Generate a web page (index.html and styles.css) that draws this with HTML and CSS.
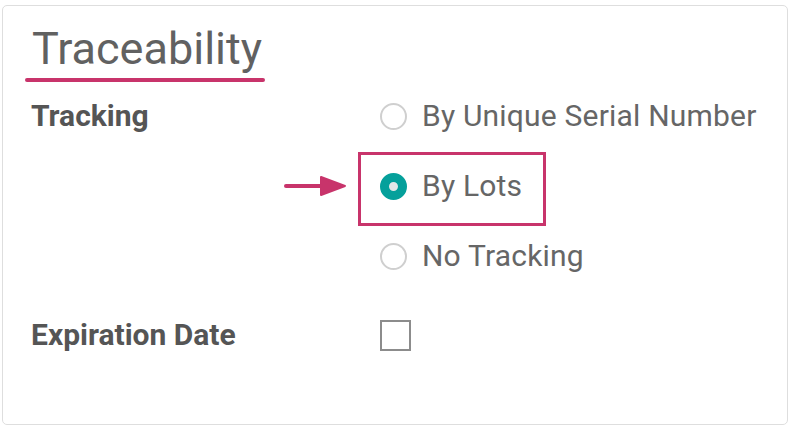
FILE: index.html
```html
<!DOCTYPE html>
<html>
<head>
<meta charset="utf-8">
<link rel="stylesheet" href="styles.css">
</head>
<body>
<div class="card">
  <div class="heading">
    <h2 class="title">Traceability</h2>
    <div class="underline"></div>
  </div>
  <div class="form">
    <div class="label label-tracking">Tracking</div>
    <div class="options">
      <div class="option">
        <span class="radio"></span>
        <span class="option-text">By Unique Serial Number</span>
      </div>
      <div class="option option-selected">
        <svg class="arrow" width="66" height="24" viewBox="0 0 66 24">
          <line x1="3" y1="12" x2="42" y2="12" stroke="#c8346b" stroke-width="4" stroke-linecap="round"/>
          <polygon points="38,3 62,12 38,21" fill="#c8346b" stroke="#c8346b" stroke-width="2" stroke-linejoin="round"/>
        </svg>
        <span class="highlight"></span>
        <span class="radio radio-checked"></span>
        <span class="option-text">By Lots</span>
      </div>
      <div class="option">
        <span class="radio"></span>
        <span class="option-text">No Tracking</span>
      </div>
    </div>
    <div class="label label-expiration">Expiration Date</div>
    <div class="check-cell">
      <span class="checkbox"></span>
    </div>
  </div>
</div>
</body>
</html>
```
FILE: styles.css
```css
html, body {
  margin: 0;
  padding: 0;
  background: #ffffff;
}

body {
  font-family: Roboto, "Liberation Sans", sans-serif;
}

.card {
  box-sizing: border-box;
  margin: 5px 5px 0 2px;
  width: 786px;
  height: 420px;
  border: 1px solid #dedede;
  border-radius: 5px;
  padding: 17px 0 0 22px;
}

.heading {
  display: inline-block;
}

.title {
  margin: 0;
  padding: 0 3px 0 7px;
  font-size: 45px;
  line-height: 52px;
  font-weight: 400;
  color: #616161;
}

.underline {
  margin-top: 3px;
  height: 4px;
  border-radius: 2px;
  background: #c8346b;
}

.form {
  display: grid;
  grid-template-columns: 349px 1fr;
  row-gap: 45px;
  margin-top: 17px;
  padding-left: 6px;
}

.label {
  font-size: 30px;
  line-height: 34px;
  font-weight: 700;
  color: #555555;
}

.options {
  display: flex;
  flex-direction: column;
  gap: 36px;
}

.option {
  position: relative;
  display: flex;
  align-items: center;
  gap: 15px;
  height: 34px;
}

.option-text {
  font-size: 30px;
  line-height: 34px;
  letter-spacing: 0.2px;
  color: #666666;
}

.radio {
  box-sizing: border-box;
  flex: none;
  width: 27px;
  height: 27px;
  border: 2px solid #cfcfcf;
  border-radius: 50%;
  background: #ffffff;
}

.radio-checked {
  border: 9px solid #05a09b;
  background: #e4e8e8;
}

.highlight {
  position: absolute;
  left: -22px;
  top: -17px;
  width: 188px;
  height: 74px;
  box-sizing: border-box;
  border: 3px solid #c8346b;
}

.arrow {
  position: absolute;
  left: -97px;
  top: 5px;
}

.check-cell {
  display: flex;
  align-items: center;
  height: 34px;
}

.checkbox {
  box-sizing: border-box;
  width: 31px;
  height: 31px;
  border: 2px solid #8c8c8c;
  background: #ffffff;
}
```
